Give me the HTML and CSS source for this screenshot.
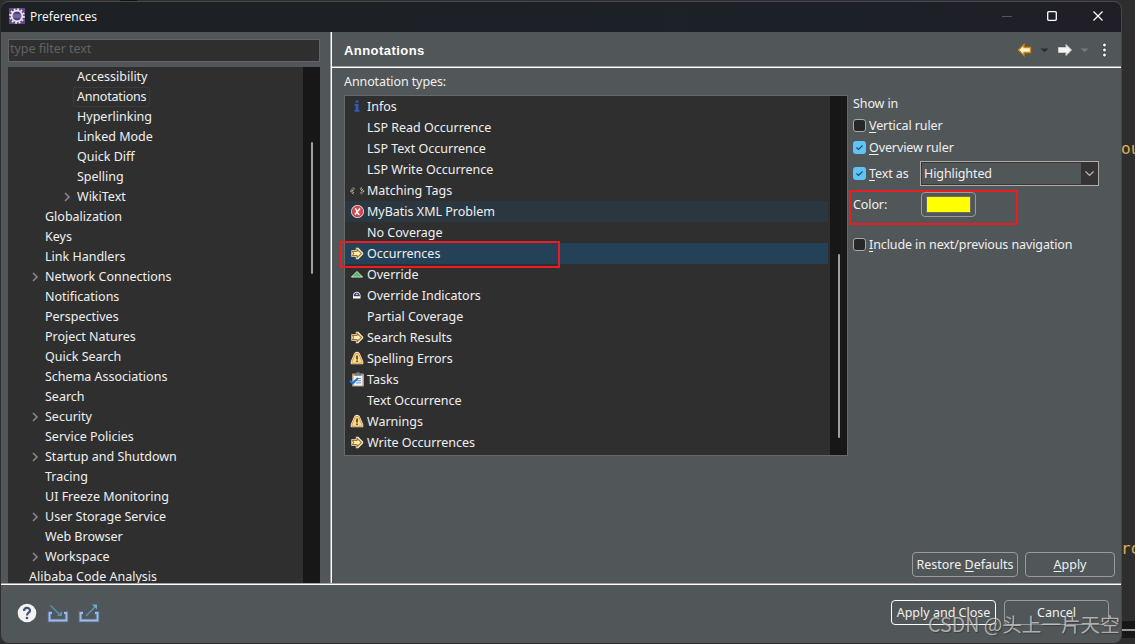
FILE: index.html
```html
<!DOCTYPE html>
<html lang="en">
<head>
    <meta charset="UTF-8">
    <title>Preferences</title>
    <link rel="stylesheet" href="styles.css">
</head>
<body>
    <!-- Shared icons -->
    <svg class="defs" width="0" height="0">
        <symbol id="chevron" viewBox="0 0 7 10"><path d="M1 1l4 4-4 4" fill="none" stroke="#858585" stroke-width="1.7"/></symbol>
        <symbol id="arrow" viewBox="0 0 16 16">
            <path d="M3 5h4.500V2.500h1.500l4.500 4.500v1L9 12.500H7.500V10H3z" fill="#fff" stroke="#f4ead2" stroke-width="1.400"/>
            <path d="M3.500 5.500H8V3.300l4.500 4.200L8 11.700V9.500H3.500l1.200-2z" fill="#fff0b4" stroke="#a8742a" stroke-width="1.100"/>
        </symbol>
        <symbol id="warn" viewBox="0 0 16 16">
            <path d="M6 2.500Q8 .8 10 2.500L13.500 10.500V12.500H2.500V10.500z" fill="#f8d88c" stroke="#f6e6c2" stroke-width="1.600" stroke-linejoin="round"/>
            <path d="M6.200 3Q8 1.600 9.800 3L13 10.500V12.300H3V10.500z" fill="#f9d890" stroke="#cf963d" stroke-width=".9" stroke-linejoin="round"/>
            <path d="M8 4.500v4M8 9.500v1.600" stroke="#6b4a1c" stroke-width="1.800"/>
        </symbol>
    </svg>

    <span class="code code-top">ou</span>
    <span class="code code-bottom">ro</span>
    <div class="status-edge"></div>
    <div class="top-edge"></div>

    <div class="dialog">
        <div class="titlebar">
            <svg class="app-icon" width="16" height="16" viewBox="0 0 16 16">
                <rect width="16" height="16" fill="#654889"/>
                <circle cx="8" cy="8" r="6.800" fill="none" stroke="#e9e7ee" stroke-width="2" stroke-dasharray="1.800 1.760"/>
                <circle cx="8" cy="8" r="5.300" fill="#50417c" stroke="#efedf2" stroke-width="1.700"/>
                <path d="M4 7h8M4 9h8" stroke="#9188b5"/>
            </svg>
            <span class="title">Preferences</span>
            <svg class="win-buttons" width="112" height="14" viewBox="0 0 112 14" fill="none">
                <path d="M0 7.500h10" stroke="#55555b"/>
                <rect x="45.700" y="2.700" width="8.600" height="8.600" rx="1" stroke="#fff" stroke-width="1.300"/>
                <path d="M91.500 2.500l9 9M100.500 2.500l-9 9" stroke="#fff" stroke-width="1.200"/>
            </svg>
        </div>

        <div class="main">
            <div class="sidebar">
                <div class="filter">type filter text</div>
                <div class="tree">
                    <div class="tree-items">
                        <div class="node l3">Accessibility</div>
                        <div class="node l3"><span class="current">Annotations</span></div>
                        <div class="node l3">Hyperlinking</div>
                        <div class="node l3">Linked Mode</div>
                        <div class="node l3">Quick Diff</div>
                        <div class="node l3">Spelling</div>
                        <div class="node l3"><svg class="chev"><use href="#chevron"/></svg>WikiText</div>
                        <div class="node l2">Globalization</div>
                        <div class="node l2">Keys</div>
                        <div class="node l2">Link Handlers</div>
                        <div class="node l2"><svg class="chev"><use href="#chevron"/></svg>Network Connections</div>
                        <div class="node l2">Notifications</div>
                        <div class="node l2">Perspectives</div>
                        <div class="node l2">Project Natures</div>
                        <div class="node l2">Quick Search</div>
                        <div class="node l2">Schema Associations</div>
                        <div class="node l2">Search</div>
                        <div class="node l2"><svg class="chev"><use href="#chevron"/></svg>Security</div>
                        <div class="node l2">Service Policies</div>
                        <div class="node l2"><svg class="chev"><use href="#chevron"/></svg>Startup and Shutdown</div>
                        <div class="node l2">Tracing</div>
                        <div class="node l2">UI Freeze Monitoring</div>
                        <div class="node l2"><svg class="chev"><use href="#chevron"/></svg>User Storage Service</div>
                        <div class="node l2">Web Browser</div>
                        <div class="node l2"><svg class="chev"><use href="#chevron"/></svg>Workspace</div>
                        <div class="node l1">Alibaba Code Analysis</div>
                    </div>
                    <div class="scroll tree-scroll"><div class="thumb"></div></div>
                </div>
            </div>

            <div class="page">
                <div class="page-head">
                    <h1>Annotations</h1>
                    <svg width="92" height="16" viewBox="0 0 92 16">
                        <path d="M1.500 8L7 2.500v3h6.500v5H7v3z" fill="#fff5d0" stroke="#c98612" stroke-width="1.300"/>
                        <path d="M23.500 6.500h8l-4 3.800z" fill="#292d2e"/>
                        <path d="M54.500 8L49 2.500v3h-7.500v5H49v3z" fill="#f5f5f5" stroke="#c9c9c9"/>
                        <path d="M63.500 6.500h8l-4 3.800z" fill="#74797b"/>
                        <g fill="#fff" stroke="#303030" stroke-width=".8"><circle cx="87.500" cy="3" r="1.900"/><circle cx="87.500" cy="8" r="1.900"/><circle cx="87.500" cy="13" r="1.900"/></g>
                    </svg>
                </div>
                <div class="page-body">
                    <div class="types">
                        <div class="label">Annotation types:</div>
                        <div class="list">
                            <div class="list-items">
                                <div class="item"><svg viewBox="0 0 16 16"><path d="M6.500 1.500h3v2.300h-3zM5.500 5h4v6h1v1.700h-5V11h1V6.700h-1z" fill="#315cb5"/></svg>Infos</div>
                                <div class="item"><svg></svg>LSP Read Occurrence</div>
                                <div class="item"><svg></svg>LSP Text Occurrence</div>
                                <div class="item"><svg></svg>LSP Write Occurrence</div>
                                <div class="item"><svg viewBox="0 0 16 16" fill="none"><path d="M5 5L2.500 8 5 11M11.500 5L14 8l-2.500 3" stroke="#d4d5a9" stroke-width="2.200" stroke-dasharray="1.200 .700"/><path d="M5 5L2.500 8 5 11M11.500 5L14 8l-2.500 3" stroke="#394132" stroke-width=".8"/></svg>Matching Tags</div>
                                <div class="item hover"><svg viewBox="0 0 16 16"><circle cx="8.500" cy="7.500" r="6.500" fill="#fff"/><circle cx="8.500" cy="7.500" r="5.400" fill="#d14b50" stroke="#b92d38" stroke-width=".8"/><path d="M6 4.500c2 0 1.500 6 4.500 6M11 4.500L6 10.500" stroke="#fff" stroke-width="1.500" fill="none"/></svg>MyBatis XML Problem</div>
                                <div class="item"><svg></svg>No Coverage</div>
                                <div class="item selected"><svg><use href="#arrow"/></svg>Occurrences</div>
                                <div class="item"><svg viewBox="0 0 16 16"><path d="M2.500 10L8 4.500l5.500 5.500z" fill="#38a54d" stroke="#e3f2e2"/><path d="M4.500 9.300L8 5.500l3.500 3.800z" fill="#56bc60"/></svg>Override</div>
                                <div class="item"><svg viewBox="0 0 16 16"><path d="M4 7.500C4.500 2.500 11 2.500 11.500 7.500v3H4z" fill="#fff"/><path d="M4.500 8.300c.8-5 5.700-5 6.500 0z" fill="#3e3a75"/><path d="M6.300 7l1.500-2 1.500 2z" fill="#b8b5dc"/></svg>Override Indicators</div>
                                <div class="item"><svg></svg>Partial Coverage</div>
                                <div class="item"><svg><use href="#arrow"/></svg>Search Results</div>
                                <div class="item"><svg><use href="#warn"/></svg>Spelling Errors</div>
                                <div class="item"><svg viewBox="0 0 16 16"><rect x="3" y="1.500" width="12" height="13" rx="1" fill="#b99a78"/><path d="M4.500 3.500h9v10h-9z" fill="#f0f5fb"/><path d="M5.500 3.800V2H7.500V.2h3V2h2v1.800z" fill="#71809b"/><path d="M8 6.500h4M8 8.700h4M7 10.900h5" stroke="#6386b4" stroke-width=".9"/><path d="M.8 8.800l3 2.500L9 6" fill="none" stroke="#1578e5" stroke-width="2"/></svg>Tasks</div>
                                <div class="item"><svg></svg>Text Occurrence</div>
                                <div class="item"><svg><use href="#warn"/></svg>Warnings</div>
                                <div class="item"><svg><use href="#arrow"/></svg>Write Occurrences</div>
                            </div>
                            <div class="scroll list-scroll"><div class="thumb"></div></div>
                        </div>
                    </div>

                    <div class="options">
                        <div class="option">Show in</div>
                        <div class="option"><span class="check"></span><span><u>V</u>ertical ruler</span></div>
                        <div class="option"><span class="check on"><svg viewBox="0 0 13 13"><path d="M3.500 6.500l2 2 4-4"/></svg></span><span><u>O</u>verview ruler</span></div>
                        <div class="option text-as">
                            <span class="check on"><svg viewBox="0 0 13 13"><path d="M3.500 6.500l2 2 4-4"/></svg></span><span class="text-label"><u>T</u>ext as</span>
                            <div class="combo"><span>Highlighted</span><svg width="17" height="21" viewBox="0 0 17 21"><path d="M4.500 8.500l4 4 4-4" fill="none" stroke="#b9b9b9" stroke-width="1.200"/></svg></div>
                        </div>
                        <div class="option color"><span class="color-label">Color:</span><div class="color-button"><div class="swatch"></div></div></div>
                        <div class="option include"><span class="check"></span><span><u>I</u>nclude in next/previous navigation</span></div>
                    </div>
                </div>
                <div class="page-buttons">
                    <div class="button restore">Restore&nbsp;<u>D</u>efaults</div>
                    <div class="button apply"><u>A</u>pply</div>
                </div>
            </div>
        </div>

        <div class="footer">
            <svg width="84" height="20" viewBox="0 0 84 20">
                <circle cx="10" cy="10" r="9.300" fill="#f3f3f3"/>
                <path d="M7 8C7 4 13 4 13 7.500c0 2.500-3 2-3 5" fill="none" stroke="#465377" stroke-width="2.200"/>
                <circle cx="10" cy="15" r="1.300" fill="#465377"/>
                <g fill="none">
                    <path d="M35 10h-2.500v7.500h17V10H47" stroke="#55709e" stroke-width="3.600"/>
                    <path d="M35 10h-2.500v7.500h17V10H47" stroke="#a2badf" stroke-width="1.800"/>
                    <path d="M33.500 2.500L43 12" stroke="#5594ba" stroke-width="1.400"/><path d="M40 13h5V8z" fill="#5594ba"/>
                    <path d="M66 10h-2.500v7.500h17V10H78" stroke="#55709e" stroke-width="3.600"/>
                    <path d="M66 10h-2.500v7.500h17V10H78" stroke="#a2badf" stroke-width="1.800"/>
                    <path d="M69 13l9-9" stroke="#5594ba" stroke-width="1.400"/><path d="M75 1.500h5v5z" fill="#70a9ca"/>
                </g>
            </svg>
            <div class="footer-buttons">
                <div class="button primary">Apply and Close</div>
                <div class="button cancel">Cancel</div>
            </div>
        </div>
    </div>

    <!-- Callouts and watermark on top of the dialog -->
    <div class="callout callout-item"></div>
    <div class="callout callout-color"></div>
    <div class="watermark">CSDN @头上一片天空</div>
</body>
</html>
```
FILE: styles.css
```css
* {
    box-sizing: border-box;
}
body {
    margin: 0;
    width: 1135px;
    height: 644px;
    overflow: hidden;
    position: relative;
    background-color: #2e2e2e;
    color: #f0f0f0;
    font-family: "Noto Sans", "Noto Sans CJK SC", sans-serif;
    font-size: 12.5px;
    padding: 1px 0 0 0;
}
.defs {
    position: absolute;
}
svg {
    display: block;
    flex: none;
}
u {
    text-underline-offset: 2px;
}

/* Editor behind the dialog */
.code {
    position: absolute;
    left: 1121px;
    color: #e8ac4e;
    font: 16px/20px "DejaVu Sans Mono", monospace;
}
.code-top {
    top: 139px;
}
.code-bottom {
    top: 539px;
}
.status-edge {
    position: absolute;
    left: 1121px;
    top: 621px;
    width: 14px;
    height: 17px;
    background: linear-gradient(#171717 8px, #999 8px, #999 10px, #171717 10px);
}
.top-edge {
    position: absolute;
    left: 120px;
    top: 0;
    width: 17px;
    height: 1px;
    background-color: #111;
}

/* Window */
.dialog {
    position: relative;
    width: 1121px;
    height: 642px;
    margin-left: 1px;
    display: flex;
    flex-direction: column;
    background-color: #515658;
    border-top: 1px solid #47494b;
    border-right: 1px solid #454749;
    border-radius: 8px;
    overflow: hidden;
}
.titlebar {
    height: 30px;
    display: flex;
    align-items: center;
    padding: 0 18px 2px 8px;
    background: linear-gradient(90deg, #1d2124, #1c2028 75%, #201e27);
}
.title {
    margin-left: 5px;
    font: 12px "Open Sans", sans-serif;
    color: #fff;
}
.win-buttons {
    margin-left: auto;
    margin-right: -11px;
}
.main {
    display: flex;
    height: 552px;
}
.sidebar {
    width: 331px;
    padding: 7px 11px 0 7px;
    border-right: 1px solid #fff;
    box-shadow: inset -1px 0 #a0a0a0;
}
.filter {
    width: 312px;
    height: 23px;
    padding-left: 1px;
    line-height: 18px;
    border: 1px solid #646464;
    background-color: #2f2f2f;
    color: #626262;
    letter-spacing: -.05px;
}
.tree {
    display: flex;
    width: 312px;
    height: 516px;
    margin-top: 5px;
    background-color: #2f2f2f;
    overflow: hidden;
}
.tree-items {
    width: 295px;
}
.node {
    display: flex;
    align-items: center;
    height: 20px;
    line-height: 20px;
    white-space: nowrap;
}
.l1 {
    padding-left: 21px;
}
.l2 {
    padding-left: 37px;
}
.l3 {
    padding-left: 69px;
}
.chev {
    width: 7px;
    height: 10px;
    margin-left: -13px;
    margin-right: 6px;
}
.current {
    margin-left: -4px;
    padding: 0 3px;
    line-height: 18px;
    border: 1px solid #3a3a3a;
    border-radius: 2px;
    letter-spacing: -.2px;
}
.scroll {
    width: 17px;
    background-color: #171717;
}
.thumb {
    width: 2px;
    margin-left: 8px;
    border-radius: 1px;
    background-color: #9f9f9f;
}
.tree-scroll {
    padding-top: 75px;
}
.tree-scroll .thumb {
    height: 132px;
}

/* Preference page */
.page {
    flex: 1;
    display: flex;
    flex-direction: column;
}
.page-head {
    display: flex;
    align-items: center;
    justify-content: space-between;
    height: 36px;
    padding: 0 12px;
    border-bottom: 1px solid #fff;
    box-shadow: inset 0 -1px #a0a0a0;
}
.page-head h1 {
    margin: 2px 0 0;
    font: bold 13px "Liberation Sans", sans-serif;
    letter-spacing: .45px;
    color: #fff;
}
.page-body {
    display: flex;
    gap: 5px;
    height: 388px;
    padding-left: 12px;
}
.label {
    height: 27px;
    line-height: 27px;
    letter-spacing: -.1px;
}
.list {
    display: flex;
    width: 504px;
    height: 361px;
    border: 1px solid #686868;
    background-color: #2f2f2f;
}
.list-items {
    width: 485px;
}
.item {
    display: flex;
    align-items: center;
    width: 483px;
    height: 21px;
    padding-left: 4px;
    line-height: 21px;
}
.item svg {
    width: 16px;
    height: 16px;
    margin-right: 2px;
}
.hover {
    background-color: #2b3740;
}
.selected {
    background-color: #254158;
}
.list-scroll {
    padding-top: 158px;
}
.list-scroll .thumb {
    height: 184px;
}
.options {
    padding-top: 24px;
}
.option {
    display: flex;
    align-items: center;
    height: 22px;
    white-space: nowrap;
    letter-spacing: -.1px;
}
.check {
    width: 13px;
    height: 13px;
    margin-right: 3px;
    border: 1px solid #aaa;
    border-radius: 3px;
    background-color: #272727;
}
.check.on {
    border: 0;
    background-color: #5cc4f7;
}
.check path {
    fill: none;
    stroke: #214b60;
    stroke-width: 1.2;
}
.text-as {
    height: 30px;
}
.text-label {
    width: 51px;
}
.combo {
    display: flex;
    align-items: center;
    justify-content: space-between;
    width: 179px;
    height: 25px;
    padding-left: 3px;
    border: 1px solid #b2abaa;
    box-shadow: inset 0 0 0 1px #373737;
    letter-spacing: -.1px;
}
.combo svg {
    background-color: #353334;
    height: 23px;
}
.color {
    height: 32px;
}
.color-label {
    width: 68px;
}
.color-button {
    display: flex;
    align-items: center;
    justify-content: center;
    width: 55px;
    height: 25px;
    border: 1px solid #9a9a9a;
    border-radius: 4px;
}
.swatch {
    width: 45px;
    height: 17px;
    border: 1px solid #6a6a69;
    background-color: #ff0;
}
.include {
    margin-top: 13px;
}
.page-buttons {
    display: flex;
    justify-content: flex-end;
    gap: 7px;
    margin-top: auto;
    padding: 0 6px 7px 0;
}
.button {
    display: flex;
    align-items: center;
    justify-content: center;
    height: 25px;
    border: 1px solid #9a9a9a;
    border-radius: 4px;
    white-space: nowrap;
}
.restore {
    width: 106px;
}
.apply {
    width: 90px;
}
.footer {
    flex: 1;
    display: flex;
    align-items: center;
    justify-content: space-between;
    padding: 0 12px 3px 16px;
    border-top: 1px solid #fff;
    box-shadow: 0 -1px #a0a0a0;
}
.footer-buttons {
    display: flex;
    gap: 8px;
}
.primary {
    width: 105px;
    border-color: #fff;
}
.cancel {
    width: 105px;
}

/* Overlays */
.callout {
    position: absolute;
    border: 2px solid #ec1c24;
}
.callout-item {
    left: 340px;
    top: 241px;
    width: 220px;
    height: 27px;
}
.callout-color {
    left: 849px;
    top: 190px;
    width: 169px;
    height: 35px;
}
.watermark {
    position: absolute;
    left: 928px;
    top: 611px;
    color: rgba(220, 220, 220, .7);
    font: 19.6px/26px "Noto Sans CJK SC", sans-serif;
    text-shadow: 1px 1px 1px rgba(40, 40, 40, .5);
    white-space: nowrap;
}
```
